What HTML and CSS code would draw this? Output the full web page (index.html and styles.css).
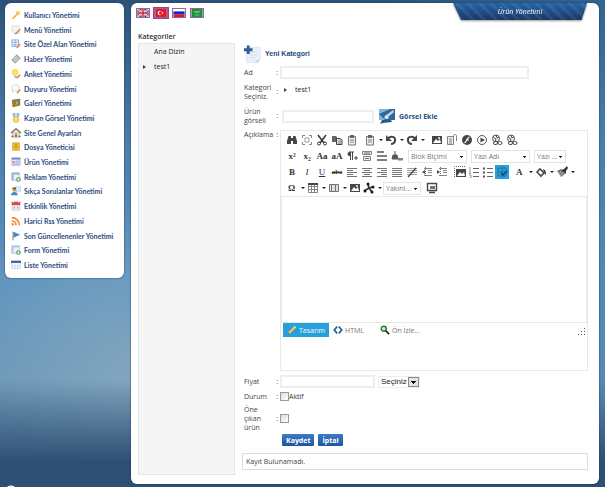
FILE: index.html
```html
<!DOCTYPE html>
<html lang="tr">
<head>
<meta charset="utf-8">
<title>Ürün Yönetimi</title>
<link rel="stylesheet" href="styles.css">
</head>
<body>
<nav class="sidebar" aria-label="Yönetim">
<ul>
<li><a href="#"><svg viewBox="0 0 12 12"><path d="M1 11l1-2 5-5 1.500 1.500-5 5z" fill="#f3b54a"/><circle cx="8.500" cy="3.500" r="2.600" fill="#f9c566"/><circle cx="9.300" cy="2.700" r=".8" fill="#fff"/></svg>Kullanıcı Yönetimi</a></li>
<li><a href="#"><svg viewBox="0 0 12 12"><path d="M1 1h9v9H4L1 8z" fill="#f4f4f4" stroke="#ccc" stroke-width=".7"/><path d="M6 10l5-5" stroke="#d88b2c" stroke-width="1.600"/><path d="M5 11l1.500-1.500" stroke="#333"/></svg>Menü Yönetimi</a></li>
<li><a href="#"><svg viewBox="0 0 12 12"><path d="M1 1h8v8H1zM5 1v8M1 4h8M1 7h8" fill="#eaf1ff" stroke="#7c9ad8" stroke-width=".8"/><path d="M7 11l4-5" stroke="#cf8538" stroke-width="1.600"/></svg>Site Özel Alan Yönetimi</a></li>
<li><a href="#"><svg viewBox="0 0 12 12"><path d="M1 7l6-6 4 4-6 6z" fill="#b8b8b8" stroke="#8b8b8b"/><path d="M3 7l4-4M5 9l4-4" stroke="#eee"/></svg>Haber Yönetimi</a></li>
<li><a href="#"><svg viewBox="0 0 12 12"><circle cx="5" cy="4" r="3.600" fill="#ffe268" stroke="#ecc638" stroke-width=".6"/><path d="M4 8h3v3H4z" fill="#b9b9b9"/><path d="M7 11l4-4" stroke="#c97d31" stroke-width="1.600"/></svg>Anket Yönetimi</a></li>
<li><a href="#"><svg viewBox="0 0 12 12"><path d="M1 4c0-4 9-4 9 0S6 8 4 8l-2 2V7z" fill="#fff" stroke="#bbb" stroke-width=".8"/><path d="M7 11l4-4" stroke="#d47f37" stroke-width="1.600"/></svg>Duyuru Yönetimi</a></li>
<li><a href="#"><svg viewBox="0 0 12 12"><path d="M1 2l10-1v8l-9 2z" fill="#a96a2c"/><path d="M2 3l3 0v3H2z" fill="#5b9e4c"/><path d="M6 3h4v3H6z" fill="#4e96b4"/><path d="M4 7h5v2H4z" fill="#73a43d"/><circle cx="7" cy="6" r="1.200" fill="#e1bd3f"/></svg>Galeri Yönetimi</a></li>
<li><a href="#"><svg viewBox="0 0 12 12"><path d="M2 0h8v4L6 7 2 4z" fill="#8fbbe7"/><path d="M5 0h2v5H5z" fill="#d6e8fa"/><circle cx="6" cy="7.800" r="3.900" fill="#f9c54c"/><circle cx="6" cy="7.800" r="1.800" fill="#ffe18b"/></svg>Kayan Görsel Yönetimi</a></li>
<li><a href="#"><svg viewBox="0 0 12 12"><path d="M2 5h8v6H2z" fill="#e8dfd0" stroke="#998" stroke-width=".6"/><path d="M0 6l6-5 6 5" fill="none" stroke="#85613e" stroke-width="1.600"/><path d="M5 7h2v4H5z" fill="#aa5b3c"/><path d="M0 11h3V9H1zM9 11h3l-1-2H9z" fill="#5c9c43"/></svg>Site Genel Ayarları</a></li>
<li><a href="#"><svg viewBox="0 0 12 12"><path d="M2 1h8v9H2z" fill="#f6bf35" stroke="#dca22a"/><path d="M2 5.500h8" stroke="#c88c17" stroke-width=".8"/><path d="M5 3.500h2M5 7.500h2" stroke="#8c6214"/></svg>Dosya Yöneticisi</a></li>
<li><a href="#"><svg viewBox="0 0 12 12"><path d="M1 1h10v9H1z" fill="#e5eaf6" stroke="#98a6ca" stroke-width=".8"/><path d="M1 1h10v2H1z" fill="#6d82c6"/><path d="M2 5h3v2H2z" fill="#d67969"/><path d="M6 5h4M6 7h4M2 8.500h8" stroke="#839dd0" stroke-width=".8"/></svg>Ürün Yönetimi</a></li>
<li><a href="#"><svg viewBox="0 0 12 12"><path d="M1 1h9v9H1z" fill="#eaf2fc" stroke="#9eb6d0" stroke-width=".8"/><path d="M1 1h9v2H1zM1 3h2v7H1z" fill="#8eb0d8"/><circle cx="9" cy="9" r="2.800" fill="#5da551"/><path d="M9 7.500v3M7.500 9h3" stroke="#fff"/></svg>Reklam Yönetimi</a></li>
<li><a href="#"><svg viewBox="0 0 12 12"><path d="M5 1h7v5H8L6 8V5H5z" fill="#e2efff" stroke="#8ab1da" stroke-width=".7"/><circle cx="4" cy="4.500" r="2.400" fill="#d59b68"/><path d="M1.500 4c0-4 5-3 5 0-2 0-3-1-5 0" fill="#744c2b"/><path d="M0 11c0-5 8-5 8 0z" fill="#4388c7"/></svg>Sıkça Sorulanlar Yönetimi</a></li>
<li><a href="#"><svg viewBox="0 0 12 12"><path d="M1 1h10v10H1z" fill="#f2f2f2" stroke="#bbb" stroke-width=".7"/><path d="M1 1h10v4H1z" fill="#d94549"/><path d="M3 0v2M9 0v2" stroke="#fff"/><path d="M3 7h2v2H3zM7 7h2v2H7z" fill="#aaa"/></svg>Etkinlik Yönetimi</a></li>
<li><a href="#"><svg viewBox="0 0 12 12"><g fill="none" stroke="#f58b3c" stroke-width="2"><path d="M1 2c5 0 9 4 9 9M1 6c3 0 5 2 5 5"/></g><circle cx="2.200" cy="10" r="1.500" fill="#f58b3c"/></svg>Harici Rss Yönetimi</a></li>
<li><a href="#"><svg viewBox="0 0 12 12"><path d="M2.500 1v10" stroke="#a77e4d" stroke-width="1.300"/><path d="M3 1l8 3.500L3 8z" fill="#3b8be0"/></svg>Son Güncellenenler Yönetimi</a></li>
<li><a href="#"><svg viewBox="0 0 12 12"><path d="M1 1h9v9H1z" fill="#eaf2fc" stroke="#9eb6d0" stroke-width=".8"/><path d="M1 1h9v2H1zM1 3h2v7H1z" fill="#b4cae2"/><circle cx="9" cy="9" r="2.800" fill="#5da551"/><path d="M9 7.500v3M7.500 9h3" stroke="#fff"/></svg>Form Yönetimi</a></li>
<li><a href="#"><svg viewBox="0 0 12 12"><path d="M1 1h10v9H1z" fill="#fff" stroke="#a9bcd9" stroke-width=".8"/><path d="M0 1h12v2.500H0z" fill="#35619f"/><path d="M4.500 4v6M8 4v6M1 7h10" stroke="#b6c9e3" stroke-width=".7"/></svg>Liste Yönetimi</a></li>
</ul>
</nav>

<main class="page">
<h1 class="ribbon"><span>Ürün Yönetimi</span></h1>
<div class="flags">
<button aria-label="English"><svg viewBox="0 0 14 10"><path fill="#26367c" d="M0 0h14v10H0z"/><path d="M0 0l14 10M14 0L0 10" stroke="#fff" stroke-width="2.200"/><path d="M0 0l14 10M14 0L0 10" stroke="#d23b4c" stroke-width=".8"/><path d="M7 0v10M0 5h14" stroke="#fff" stroke-width="3.400"/><path d="M7 0v10M0 5h14" stroke="#d5192f" stroke-width="1.800"/></svg></button>
<button class="current" aria-label="Türkçe"><svg viewBox="0 0 14 10"><path fill="#e21b25" d="M0 0h14v10H0z"/><circle cx="5.500" cy="5" r="2.700" fill="#fff"/><circle cx="6.400" cy="5" r="2.100" fill="#e21b25"/><circle cx="9" cy="5" r=".9" fill="#fff"/></svg></button>
<button aria-label="Русский"><svg viewBox="0 0 14 10"><path fill="#fff" d="M0 0h14v4H0z"/><path fill="#1226c4" d="M0 3h14v4H0z"/><path fill="#e11" d="M0 7h14v3H0z"/></svg></button>
<button aria-label="العربية"><svg viewBox="0 0 14 10"><path fill="#1d9135" d="M0 0h14v10H0z"/><path d="M3 3h8M4 4.500h6M4 7.500h6" stroke="#a5d7ad" stroke-width=".8"/></svg></button>
</div>
<h2 class="tree-title">Kategoriler</h2>
<div class="columns">
<ul class="tree">
<li><a href="#">Ana Dizin</a></li>
<li class="parent"><a href="#">test1</a></li>
</ul>

<form class="form">
<h3><svg viewBox="0 0 20 20"><path d="M3 6l3-3h12v12l-2 4H4z" fill="#e9f1f9" stroke="#d3e1ee" stroke-width=".8"/><path d="M16 19l-4-1 6-3z" fill="#c5d8ea"/><path d="M7 8h8M7 11h8M7 14h6" stroke="#cfdeec"/><path d="M5.500 1v9M1 5.500h9" stroke="#2a6194" stroke-width="3"/></svg>Yeni Kategori</h3>
<div class="row"><label for="ad">Ad</label><div class="field"><input class="text wide" id="ad" type="text"></div></div>
<div class="row tree-row"><span class="label">Kategori Seçiniz.</span><div class="field"><a class="node" href="#">test1</a></div></div>
<div class="row"><label for="gorsel">Ürün görseli</label><div class="field"><input class="text image" id="gorsel" type="text"><a class="add-image" href="#"><svg viewBox="0 0 18 16"><path d="M1 1h16v11H1z" fill="#83b4d7"/><path d="M1 6L12 1h5v11H7z" fill="#2e699c"/><path d="M7 8l8-6 1 2-7 6z" fill="#b9d8ec"/><path d="M8 7l3 3-2 1-3-1z" fill="#e2f0fa"/><path d="M4 12h9l1 2-9 1-3 1z" fill="#245a8c"/></svg>Görsel Ekle</a></div></div>
<div class="row editor-row"><span class="label">Açıklama</span>
<div class="editor">
<div class="tools">
<div class="set">
<button type="button" aria-label="Bul"><svg viewBox="0 0 12 12"><path d="M2.500 2H5v2h2V2h2.500L11 7v3H7V7H5v3H1V7z" fill="#333"/></svg></button>
<button type="button" aria-label="Tam ekran"><svg viewBox="0 0 12 12"><path d="M1.500 4V1.500H4M8 1.500h2.500V4M10.500 8v2.500H8M4 10.500H1.500V8" fill="none" stroke="#777"/><path d="M4 4h4v4H4z" fill="none" stroke="#999"/></svg></button>
<button type="button" aria-label="Kes"><svg viewBox="0 0 12 12"><path d="M2 1l6 8M10 1L4 9" stroke="#222" stroke-width="1.500"/><circle cx="3" cy="9.500" r="1.500" fill="none" stroke="#222"/><circle cx="9" cy="9.500" r="1.500" fill="none" stroke="#222"/></svg></button>
<button type="button" aria-label="Kopyala"><svg viewBox="0 0 12 12"><path d="M1 2h4l1 1v5H1z" fill="#555"/><path d="M5.500 4.500H9L11 6v4.500H5.500z" fill="#ddd" stroke="#333"/><path d="M7 7h3M7 9h3" stroke="#555" stroke-width=".8"/></svg></button>
<button type="button" aria-label="Yapıştır"><svg viewBox="0 0 12 12"><use href="#paste"/></svg></button>
</div>
<div class="splits">
<button type="button" class="split" aria-label="Yapıştırma seçenekleri"><svg viewBox="0 0 12 12"><g id="paste"><path d="M2.500 2.500h7v8.500h-7z" fill="#eee" stroke="#666"/><path d="M4 1h4v3H4z" fill="#555"/><path d="M4 6h4M4 8h4" stroke="#777"/></g></svg></button>
<button type="button" class="split" aria-label="Geri al"><svg viewBox="0 0 12 12"><path d="M3 4.500C6 1 11 3 10 7c-.5 2-2 3-4 3" fill="none" stroke="#333" stroke-width="2"/><path d="M1 1v6h6z" fill="#333"/></svg></button>
<button type="button" class="split" aria-label="Yinele"><svg viewBox="0 0 12 12"><path d="M9 4.500C6 1 1 3 2 7c.5 2 2 3 4 3" fill="none" stroke="#333" stroke-width="2"/><path d="M11 1v6H5z" fill="#333"/></svg></button>
</div>
<div class="set">
<button type="button" aria-label="Resim"><svg viewBox="0 0 12 12"><g id="pic"><path d="M1 2h10v8H1z" fill="#333"/><path d="M2 9l3-4 2 2 2-2 1 4z" fill="#fff"/><circle cx="8" cy="4" r="1" fill="#fff"/></g></svg></button>
<button type="button" aria-label="Belge"><svg viewBox="0 0 12 12"><path d="M1.500 2.500h6v8h-6z" fill="#eee" stroke="#777"/><path d="M3 5h3M3 7h3M3 9h3" stroke="#777"/><path d="M7.500 5V2c0-2 3-2 3 0v5" fill="none" stroke="#777"/></svg></button>
<button type="button" aria-label="Flash"><svg viewBox="0 0 12 12"><circle cx="6" cy="6" r="5" fill="#333"/><path d="M3.500 9C6 8 5 4 8.500 3M5 6h3" fill="none" stroke="#fff" stroke-width="1.200"/></svg></button>
<button type="button" aria-label="Medya"><svg viewBox="0 0 12 12"><circle cx="6" cy="6" r="4.500" fill="#fff" stroke="#444"/><path d="M4.500 3.500L9 6 4.500 8.500z" fill="#333"/></svg></button>
<button type="button" aria-label="Bağlantı"><svg viewBox="0 0 12 12"><g id="globe"><circle cx="5" cy="4.500" r="3.500" fill="#eee" stroke="#444"/><path d="M2 3c2 0 1 2 3 2L4 8M5 1l1 3 2-1" stroke="#444" fill="none"/><rect x="2.500" y="7.500" width="4" height="3" rx="1.500" fill="#fff" stroke="#333"/><rect x="7" y="7.500" width="4" height="3" rx="1.500" fill="#fff" stroke="#333"/></g></svg></button>
<button type="button" aria-label="Bağlantıyı kaldır"><svg viewBox="0 0 12 12"><use href="#globe"/><path d="M6 0h5v4z" fill="#fff"/></svg></button>
</div>
</div>
<div class="tools">
<div class="set">
<button type="button" class="serif bold">x²</button>
<button type="button" class="serif bold">x₂</button>
<button type="button" class="serif bold">Aa</button>
<button type="button" class="serif bold">aA</button>
<button type="button" aria-label="Paragraf"><svg viewBox="0 0 12 12"><path d="M5 2H3.500a2 2 0 000 4H5z" fill="#333"/><path d="M4.500 2v8M6.500 2v8M3 2h5" stroke="#333"/><path d="M8 8h4M10 6v4" stroke="#333"/></svg></button>
<button type="button" aria-label="Biçimi temizle"><svg viewBox="0 0 12 12"><path d="M1.500 1.500h9v3h-9zM2.500 6.500h7v4h-7z" fill="#eee" stroke="#777"/><path d="M3 3h6M4 8.500h4" stroke="#555"/></svg></button>
<button type="button" aria-label="Yatay çizgi"><svg viewBox="0 0 12 12"><path d="M1 2h7M1 6h10M1 10h10" stroke="#444" stroke-width="1.600"/></svg></button>
<button type="button" aria-label="Stil temizle"><svg viewBox="0 0 12 12"><path d="M4 1v4M1 9l1-4h4l1 4z" fill="#444" stroke="#444"/><path d="M7 8h5v2.500H7z" fill="#777"/></svg></button>
</div>
<select class="drop" aria-label="Blok Biçimi"><option>Blok Biçimi</option></select>
<select class="drop" aria-label="Yazı Adı"><option>Yazı Adı</option></select>
<select class="drop size" aria-label="Yazı boyutu"><option>Yazı ...</option></select>
</div>
<div class="tools">
<div class="set">
<button type="button" class="serif"><b>B</b></button>
<button type="button" class="serif"><i>I</i></button>
<button type="button" class="serif"><u>U</u></button>
<button type="button" class="serif bold small"><s>abc</s></button>
<button type="button" aria-label="Sola hizala"><svg viewBox="0 0 12 12"><path d="M1 2.500h10M1 4.500h6M1 6.500h10M1 8.500h6M1 10.500h10" stroke="#666"/></svg></button>
<button type="button" aria-label="Ortala"><svg viewBox="0 0 12 12"><path d="M1 2.500h10M3 4.500h6M1 6.500h10M3 8.500h6M1 10.500h10" stroke="#666"/></svg></button>
<button type="button" aria-label="Sağa hizala"><svg viewBox="0 0 12 12"><path d="M1 2.500h10M5 4.500h6M1 6.500h10M5 8.500h6M1 10.500h10" stroke="#666"/></svg></button>
<button type="button" aria-label="İki yana yasla"><svg viewBox="0 0 12 12"><path d="M1 2.500h10M1 4.500h10M1 6.500h10M1 8.500h10M1 10.500h10" stroke="#666"/></svg></button>
<button type="button" aria-label="Hizalama yok"><svg viewBox="0 0 12 12"><path d="M1 2.500h10M1 4.500h10M1 6.500h10M1 8.500h10" stroke="#999"/><path d="M2 11l8-9" stroke="#333" stroke-width="1.300"/></svg></button>
<button type="button" aria-label="Girintiyi azalt"><svg viewBox="0 0 12 12"><path d="M3 2.500h8M7 4.500h4M7 6.500h4M3 9.500h8" stroke="#777"/><path d="M4.500 1v10" stroke="#666" stroke-dasharray="1 1"/><path d="M1 6l3-2v4z" fill="#333"/></svg></button>
<button type="button" aria-label="Girintiyi artır"><svg viewBox="0 0 12 12"><path d="M3 2.500h8M7 4.500h4M7 6.500h4M3 9.500h8" stroke="#777"/><path d="M4.500 1v10" stroke="#666" stroke-dasharray="1 1"/><path d="M4 6L1 4v4z" fill="#333"/></svg></button>
</div>
<div class="splits">
<button type="button" aria-label="Resim kenarlığı"><svg viewBox="0 0 12 12"><path d="M.500 11V.500H11" fill="none" stroke="#555" stroke-dasharray="1 1"/><path d="M2 3h10v8H2z" fill="#333"/><path d="M3 10l3-4 2 2 2-2 1 4z" fill="#fff"/></svg></button>
<button type="button" aria-label="Numaralı liste"><svg viewBox="0 0 12 12"><path d="M5 2.500h6M5 6.500h6M5 10.500h6" stroke="#555"/><path d="M2 1v3M1 5h1.500v1L1 7.500h2M1 9h2v3H1" fill="none" stroke="#777" stroke-width=".8"/></svg></button>
<button type="button" aria-label="Liste"><svg viewBox="0 0 12 12"><path d="M5 2.500h6M5 6.500h6M5 10.500h6" stroke="#555"/><path d="M1 1.500h2v2H1zM1 5.500h2v2H1zM1 9.500h2v2H1z" fill="#444"/></svg></button>
<button type="button" class="active" aria-label="Kılavuz çizgileri"><svg viewBox="0 0 12 12"><path d="M2 2h8v8H2zM2 6h8M6 2v8" fill="none" stroke="#2b6f96"/><path d="M5 7l2 2 4-4" fill="none" stroke="#143e58" stroke-width="1.500"/></svg></button>
</div>
<div class="splits">
<button type="button" class="split serif"><b>A</b></button>
<button type="button" class="split" aria-label="Arka plan rengi"><svg viewBox="0 0 12 12"><path d="M2 6l3-3 4 4-3 3z" fill="#fff" stroke="#333" stroke-width="1.600"/><path d="M8 3c3 1 3 3 3 6l-2-2z" fill="#333"/></svg></button>
<button type="button" class="split" aria-label="Biçim boyacısı"><svg viewBox="0 0 12 12"><path d="M1 5l4-2 4 5-4 3z" fill="#666"/><path d="M5 4l3-1 3-3 1 2-2 3v3z" fill="#222"/><path d="M2 6l3 4M4 5l3 4" stroke="#ddd" stroke-width=".6"/></svg></button>
</div>
</div>
<div class="tools">
<div class="splits">
<button type="button" class="split serif"><b>Ω</b></button>
<button type="button" class="split" aria-label="Tablo"><svg viewBox="0 0 12 12"><path d="M1.500 1.500h9v9h-9zM1.500 4.500h9M1.500 7.500h9M4.500 2v9M7.500 2v9" fill="none" stroke="#777"/><path d="M1 1h10v2H1z" fill="#333"/></svg></button>
<button type="button" class="split" aria-label="Form öğesi"><svg viewBox="0 0 12 12"><path d="M1.500 2.500h9v7h-9z" fill="#ddd" stroke="#666"/><path d="M3.500 3v6M7.500 3v6" stroke="#666"/></svg></button>
<button type="button" aria-label="Resim haritası"><svg viewBox="0 0 12 12"><use href="#pic"/></svg></button>
<button type="button" class="split" aria-label="Ek araçlar"><svg viewBox="0 0 12 12"><path d="M1 9l5-3-1-4M6 6l4-1M6 6l3 4" fill="none" stroke="#222" stroke-width="1.700"/><circle cx="5" cy="2" r="1.500"/><circle cx="2" cy="9" r="1.500"/><circle cx="10" cy="5" r="1.500"/><circle cx="9" cy="10" r="1.500"/></svg></button>
</div>
<select class="drop zoom" aria-label="Yakınlaştır"><option>Yakınl...</option></select>
<button type="button" aria-label="Ekran"><svg viewBox="0 0 12 12"><path d="M1.500 1.500h9v7h-9zM3 10.500h6" fill="none" stroke="#333" stroke-width="1.400"/><path d="M4 4h5v3H4z" fill="#666"/></svg></button>
</div>
<textarea aria-label="Açıklama"></textarea>
<div class="modes">
<button type="button" class="mode active"><svg viewBox="0 0 12 12"><path d="M1 11l1-3 6-6 2 2-6 6z" fill="#ffc34b"/><path d="M8 2l1-1 2 2-1 1z" fill="#f3e4c8"/><path d="M1 11l.5-1.500 1 1z" fill="#222"/></svg>Tasarım</button>
<button type="button" class="mode"><svg viewBox="0 0 12 12"><path d="M5 2L1.500 6 5 10M7 2l3.500 4L7 10" fill="none" stroke="#20628f" stroke-width="2"/></svg>HTML</button>
<button type="button" class="mode preview"><svg viewBox="0 0 12 12"><circle cx="4.500" cy="4.500" r="3" fill="#d5efd0" stroke="#37713a" stroke-width="1.800"/><path d="M7 7l4 4" stroke="#222" stroke-width="2"/></svg>Ön İzle...</button>
<svg class="grip" viewBox="0 0 8 8"><path d="M6 0h1v1H6zM3 3h1v1H3zM6 3h1v1H6zM0 6h1v1H0zM3 6h1v1H3zM6 6h1v1H6z" fill="#555"/></svg>
</div>
</div>
</div>
<div class="row"><label for="fiyat">Fiyat</label><div class="field price"><input class="text" id="fiyat" type="text"><select class="currency" aria-label="Para birimi"><option>Seçiniz</option></select></div></div>
<div class="row"><span class="label">Durum</span><div class="field"><input type="checkbox" id="durum"><label class="plain" for="durum">Aktif</label></div></div>
<div class="row"><label for="one">Öne çıkan ürün</label><div class="field"><input type="checkbox" id="one"></div></div>
<div class="actions"><button type="submit">Kaydet</button><button type="button">İptal</button></div>
<p class="result">Kayıt Bulunamadı.</p>
</form>
</div>
</main>
</body>
</html>
```
FILE: styles.css
```css
* { box-sizing: border-box; }

body {
  margin: 0;
  padding: 3px 6px 3px 5px;
  min-height: 100vh;
  display: flex;
  gap: 7px;
  font: 7px/9px "Open Sans", "Noto Sans", sans-serif;
  color: #444;
  background:
    radial-gradient(circle at 11px calc(100% + 5px), #e8eef4 0 6px, transparent 7px),
    linear-gradient(transparent 78%, #2d4f73 95%),
    radial-gradient(ellipse at 24% 78%, #8bacc1cc, transparent 35%),
    linear-gradient(90deg, transparent 60%, #3f7db066),
    linear-gradient(#2c5278, #4e7fab 30%, #5a92bf 58%, #6492b7 75%, #6f98b5);
}

button, input, select, textarea { font: inherit; color: inherit; margin: 0; }
button { border: 0; padding: 0; background: none; }
a { color: inherit; text-decoration: none; }
ul, h1, h2, h3, p { margin: 0; padding: 0; list-style: none; font-size: inherit; }
svg { display: block; flex: none; }

.sidebar {
  flex: 0 0 119px;
  align-self: flex-start;
  padding: 5px 7px 6px 6px;
  background: #fff;
  border-radius: 6px;
  box-shadow: 0 0 2px #17385c;
}
.sidebar ul {
  display: flex;
  flex-direction: column;
  justify-content: space-between;
  min-height: 264px;
}
.sidebar a {
  display: flex;
  align-items: center;
  gap: 3px;
  line-height: 14px;
  font-family: Lato, sans-serif;
  font-weight: 700;
  color: #2c4c80;
  white-space: nowrap;
}
.sidebar svg { width: 10px; height: 10px; }

.page {
  position: relative;
  flex: 1;
  min-width: 0;
  display: flex;
  flex-direction: column;
  padding: 4px 11px 9px 7px;
  background: #fff;
  border-radius: 6px;
  box-shadow: 0 0 2px #17385c;
}
.ribbon {
  position: absolute;
  top: 0;
  right: 12px;
  filter: drop-shadow(0 1px 1px #0006);
}
.ribbon span {
  display: block;
  width: 134px;
  line-height: 17px;
  text-align: center;
  font-weight: 400;
  font-style: italic;
  color: #fff;
  background:
    repeating-linear-gradient(45deg, transparent 0 5px, #ffffff12 5px 8px),
    linear-gradient(#2463ab, #1c3964);
  clip-path: polygon(0 0, 100% 0, 96% 100%, 6% 100%);
}
.flags { display: flex; gap: 2px; margin-left: -3px; }
.flags button { border: 1px solid transparent; }
.flags .current { border-color: #b03a80; background: #d998bd; }
.flags svg { width: 14px; height: 10px; border: 1px solid #8a6aa0; }
.tree-title { margin-top: 12px; padding-bottom: 1px; line-height: 11px; font-weight: 600; color: #333; }
.columns { flex: 1; display: flex; gap: 7px; }

.tree {
  flex: 0 0 97px;
  padding-left: 15px;
  background: #f5f5f5;
  border: 1px solid #e6e6e6;
  line-height: 15px;
  color: #222;
}
.parent::before, .node::before {
  content: "";
  display: inline-block;
  border: 2px solid transparent;
  border-left: 3px solid #444;
  border-right: 0;
}
.parent::before { margin: 0 8px 0 -11px; }
.node::before { margin: 0 8px 0 4px; }
.node { color: #222; line-height: 14px; }

.form { flex: 1; min-width: 0; }
.form h3 {
  display: flex;
  align-items: center;
  gap: 3px;
  height: 21px;
  padding-left: 1px;
  font-family: "Liberation Sans", sans-serif;
  font-weight: 700;
  color: #23497c;
}
.form h3 svg { width: 19px; height: 20px; }
.row { display: flex; align-items: center; padding: 2px 0 2px 2px; }
.row > label, .row > .label {
  position: relative;
  flex: 0 0 36px;
  padding-right: 5px;
}
.row > label::after, .row > .label::after {
  content: ":";
  position: absolute;
  right: 2px;
  top: calc(50% - 5px);
}
.tree-row { margin-bottom: 2px; align-items: flex-start; }
.field { flex: 1; display: flex; align-items: center; min-width: 0; }
.text {
  width: 92px;
  height: 13px;
  padding: 0 3px;
  background: #fff;
  border: 2px solid #eee;
}
.wide { width: 81%; }
.image { margin-left: 2px; }
.add-image {
  display: flex;
  align-items: center;
  gap: 3px;
  margin-left: 4px;
  font-weight: 700;
  color: #2a5080;
}
.add-image svg { width: 18px; height: 16px; }

.editor-row { align-items: flex-start; padding-top: 3px; }
.editor {
  flex: 1;
  min-width: 0;
  padding-bottom: 33px;
  border: 1px solid #e8e8e8;
}
.tools {
  display: flex;
  align-items: center;
  gap: 4px;
  height: 16px;
  padding-left: 4px;
}
.tools:first-child { margin-top: 1px; }
.set { display: flex; gap: 1px; }
.splits { display: flex; }
.tools button {
  display: flex;
  align-items: center;
  justify-content: center;
  width: 14px;
  height: 14px;
}
.tools button svg { width: 12px; height: 12px; opacity: .9; }
.tools .serif { font: 9px/12px "Liberation Serif", serif; color: #333; }
.tools .bold { font-weight: 700; }
.tools .small { font-size: 7px; }
.tools .active { background: #25a0da; }
.tools .split { width: 21px; padding-left: 1px; justify-content: space-between; }
.tools .split.serif { padding-left: 3px; }
.split::after {
  content: "";
  margin-right: 1px;
  border: 2px solid transparent;
  border-top-color: #222;
  border-bottom: 0;
}
.drop {
  appearance: none;
  width: 59px;
  height: 13px;
  padding: 0 2px;
  border: 1px solid #e4e4e4;
  color: #777;
  background:
    linear-gradient(#222, #222) right 3px top 5px / 3px 1px no-repeat,
    linear-gradient(#222, #222) right 4px top 6px / 1px 1px no-repeat;
}
.size { width: 32px; }
.zoom { width: 38px; margin-left: -4px; }
.editor textarea {
  display: block;
  width: 100%;
  height: 127px;
  resize: none;
  border: 1px solid #e8e8e8;
  background: #fff;
}
.modes { display: flex; align-items: center; padding-left: 2px; }
.mode {
  display: flex;
  align-items: center;
  gap: 2px;
  height: 14px;
  padding: 0 4px;
  color: #777;
}
.mode svg { width: 10px; height: 10px; }
.mode.active { width: 46px; background: #25a0da; color: #fff; }
.preview { margin-left: 8px; }
.grip { width: 8px; height: 8px; margin: 3px 1px 0 auto; }

.price { gap: 3px; }
.price .text { width: 95px; }
.currency {
  appearance: none;
  width: 42px;
  height: 12px;
  padding: 0 0 0 2px;
  border: 1px solid #eee;
  font: 8px/10px "Liberation Sans", sans-serif;
  color: #222;
  background:
    linear-gradient(#111, #111) right 4px top 5px / 3px 1px no-repeat,
    linear-gradient(#111, #111) right 3px top 4px / 5px 1px no-repeat,
    linear-gradient(#111, #111) right 5px top 6px / 1px 1px no-repeat,
    linear-gradient(#e4e4e4, #e4e4e4) right 1px top 1px / 9px 8px no-repeat,
    linear-gradient(#888, #888) right / 11px 100% no-repeat #fff;
}
input[type="checkbox"] {
  appearance: none;
  width: 9px;
  height: 9px;
  border: 1px solid #999;
  background: linear-gradient(135deg, #ddd, #fff);
}
.plain { color: #333; }
.actions { display: flex; gap: 4px; padding-left: 40px; }
.actions button {
  height: 12px;
  padding: 0 4px;
  border-radius: 1px;
  background: linear-gradient(#3b7cc8, #1f549d);
  color: #fff;
  font-weight: 700;
}
.result {
  margin-top: 7px;
  padding: 3px;
  border: 1px solid #ddd;
}
```
